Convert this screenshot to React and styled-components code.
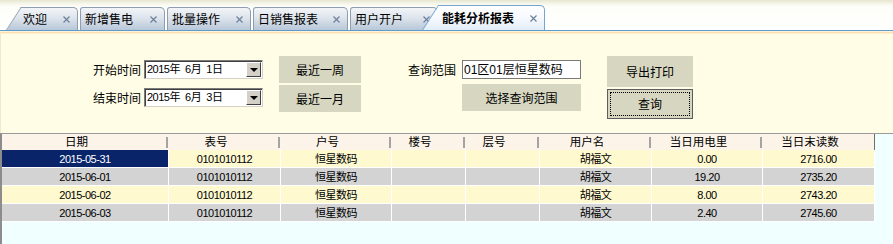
import React from "react";
import styled, { createGlobalStyle } from "styled-components";

const GlobalStyle = createGlobalStyle`
  html, body {
    margin: 0;
    padding: 0;
  }
  body {
    width: 893px;
    height: 244px;
    overflow: hidden;
    background: #f0ffff;
    font-family: "Liberation Sans", "Noto Sans CJK SC", sans-serif;
    font-size: 12px;
    color: #000;
  }
`;

const Page = styled.div`
  width: 893px;
  height: 244px;
  display: flex;
  flex-direction: column;
`;

const TabBar = styled.div`
  height: 30px;
  display: flex;
  align-items: flex-end;
  padding-left: 22px;
  box-sizing: border-box;
  background: linear-gradient(#e6e6cf 0, #f3f3e6 3px, #fdfdf8 6px, #ffffff 100%);
`;

const Tab = styled.div`
  position: relative;
  z-index: ${(p) => (p.$active ? 2 : 1)};
  box-sizing: border-box;
  width: ${(p) => p.$width}px;
  height: ${(p) => (p.$active ? 25 : 23)}px;
  margin-left: ${(p) => p.$gap}px;
  display: flex;
  align-items: center;
  justify-content: space-between;
  padding: 1px 8px 0 ${(p) => p.$pad}px;
  font-family: "Noto Sans CJK SC", sans-serif;
  font-size: 12px;
  line-height: 1;
  font-weight: ${(p) => (p.$active ? 700 : 400)};

  &::after {
    content: "";
    position: absolute;
    inset: 0;
    z-index: -1;
    border: 1px solid ${(p) => (p.$active ? "#74a5d1" : "#8e9db2")};
    border-bottom: none;
    border-left-style: ${(p) => (p.$slant ? "none" : "solid")};
    border-top-right-radius: 5px;
    border-top-left-radius: ${(p) => (p.$slant ? 0 : 3)}px;
    background: ${(p) =>
      p.$active
        ? "linear-gradient(#ffffff, #f6f9fd 50%, #e3edf8)"
        : "linear-gradient(#f3f5f8, #dde4ec 45%, #b8c7d9)"};
  }

  &::before {
    content: "";
    display: ${(p) => (p.$slant ? "block" : "none")};
    position: absolute;
    top: 0;
    bottom: 0;
    left: -16px;
    width: 32px;
    z-index: -1;
    border-left: 1px solid ${(p) => (p.$active ? "#74a5d1" : "#8e9db2")};
    border-top: 1px solid ${(p) => (p.$active ? "#74a5d1" : "#8e9db2")};
    background: ${(p) =>
      p.$active
        ? "linear-gradient(#ffffff, #f6f9fd 50%, #e3edf8)"
        : "linear-gradient(#f3f5f8, #dde4ec 45%, #b8c7d9)"};
    transform: skewX(-33deg);
    transform-origin: bottom left;
  }
`;

const Close = styled.svg`
  width: 7px;
  height: 7px;
  flex: none;
`;

const Stripe = styled.div`
  height: 4px;
  background: linear-gradient(
    #5a9ccc 0 1px,
    #fff4da 1px 2px,
    #fde0b0 2px 3px,
    #fff0d2 3px 4px
  );
`;

const Panel = styled.div`
  box-sizing: border-box;
  height: 99px;
  background: #fffde6;
  border-left: 1px solid #f2e8cc;
  display: flex;
  align-items: flex-start;
  padding: 22px 0 0 92px;
  font-family: "Noto Sans CJK SC", sans-serif;
`;

const FieldColumn = styled.div`
  display: flex;
  flex-direction: column;
  gap: 9px;
  margin-top: 4px;
`;

const FieldRow = styled.div`
  display: flex;
  align-items: center;
  gap: 4px;
`;

const Label = styled.span`
  width: ${(p) => p.$w || 47}px;
  font-size: 12px;
  line-height: 1;
  white-space: nowrap;
`;

const DateBox = styled.div`
  box-sizing: border-box;
  width: 119px;
  height: 19px;
  background: #fff;
  border: 1px solid;
  border-color: #7b7b7b #d4d0c8 #d4d0c8 #7b7b7b;
  box-shadow: inset 1px 1px 0 #404040;
  display: flex;
  align-items: center;
  justify-content: space-between;
  padding: 0 1px 0 2px;
`;

const DateText = styled.span`
  font-family: "Liberation Sans", "Noto Sans CJK SC", sans-serif;
  font-size: 11px;
  letter-spacing: -0.5px;
  white-space: pre;
  line-height: 1;
`;

const DropButton = styled.span`
  box-sizing: border-box;
  width: 15px;
  height: 15px;
  background: #d4d0c8;
  border: 1px solid;
  border-color: #ffffff #404040 #404040 #ffffff;
  display: flex;
  align-items: center;
  justify-content: center;

  &::before {
    content: "";
    border-left: 4px solid transparent;
    border-right: 4px solid transparent;
    border-top: 4px solid #000;
    margin-top: 1px;
  }
`;

const ButtonColumn = styled.div`
  display: flex;
  flex-direction: column;
  gap: 2px;
  margin-left: ${(p) => p.$ml}px;
`;

const Button = styled.button`
  box-sizing: border-box;
  width: ${(p) => p.$w}px;
  height: ${(p) => p.$h}px;
  padding: 0;
  background: #d7d7c1;
  border: ${(p) => (p.$focus ? "1px solid #5c5c5c" : "none")};
  outline: ${(p) => (p.$focus ? "1px dotted #000" : "none")};
  outline-offset: -4px;
  font-family: "Noto Sans CJK SC", sans-serif;
  font-size: 12px;
  color: #000;
  line-height: 1;
`;

const RangeGroup = styled.div`
  display: grid;
  grid-template-columns: 45px 119px;
  column-gap: 9px;
  row-gap: 5px;
  align-items: center;
  margin-left: 47px;
  margin-top: 4px;
`;

const TextInput = styled.div`
  box-sizing: border-box;
  width: 119px;
  height: 19px;
  background: #fff;
  border: 1px solid #7a7a7a;
  display: flex;
  align-items: center;
  padding-left: 1px;
  font-family: "Liberation Sans", "Noto Sans CJK SC", sans-serif;
  font-size: 12px;
  line-height: 1;
`;

const GridArea = styled.div`
  flex: 1;
  border-top: 1px solid #9a9a9a;
  border-left: 2px solid #8c8c8c;
  background: #f0ffff;
`;

const columns = "167px 112px 111px 74px 74px 112px 111px 112px";

const HeaderRow = styled.div`
  display: grid;
  grid-template-columns: ${columns};
  box-sizing: border-box;
  width: 873px;
  height: 16px;
  background: #fcf4e9;
  border-right: 1px solid #6e6e6e;
`;

const HeaderCell = styled.div`
  display: flex;
  align-items: center;
  justify-content: center;
  padding-right: 18px;
  font-family: "Noto Sans CJK SC", sans-serif;
  font-size: 11.5px;
  line-height: 1;
  background: ${(p) =>
    p.$last
      ? "none"
      : "linear-gradient(#a4a4a4, #a4a4a4) no-repeat right 1px center / 2px 11px"};
`;

const Row = styled.div`
  display: grid;
  grid-template-columns: ${columns};
  width: 873px;
  height: 18px;
  box-sizing: border-box;
  border-bottom: 1px solid #fff;
`;

const Cell = styled.div`
  display: flex;
  align-items: center;
  justify-content: center;
  border-right: 1px solid #fff;
  background: ${(p) => (p.$selected ? "#0a246a" : p.$bg)};
  color: ${(p) => (p.$selected ? "#fff" : "#000")};
  font-family: "Liberation Sans", "Noto Sans CJK SC", sans-serif;
  font-size: 11px;
  letter-spacing: -0.5px;
  line-height: 1;
  padding-top: 1px;
`;

const tabs = [
  { title: "欢迎", width: 56, gap: 0, pad: 1, slant: true },
  { title: "新增售电", width: 85, gap: 2, pad: 5 },
  { title: "批量操作", width: 84, gap: 2, pad: 5 },
  { title: "日销售报表", width: 95, gap: 2, pad: 5 },
  { title: "用户开户", width: 88, gap: 2, pad: 5 },
  { title: "能耗分析报表", width: 107, gap: 0, pad: 4, slant: true, active: true },
];

const headers = ["日期", "表号", "户号", "楼号", "层号", "用户名", "当日用电里", "当日末读数"];

const rows = [
  ["2015-05-31", "0101010112", "恒星数码", "", "", "胡福文", "0.00", "2716.00"],
  ["2015-06-01", "0101010112", "恒星数码", "", "", "胡福文", "19.20", "2735.20"],
  ["2015-06-02", "0101010112", "恒星数码", "", "", "胡福文", "8.00", "2743.20"],
  ["2015-06-03", "0101010112", "恒星数码", "", "", "胡福文", "2.40", "2745.60"],
];

const CloseIcon = () => (
  <Close viewBox="0 0 7 7">
    <path d="M0.5 0.5 L6.5 6.5 M6.5 0.5 L0.5 6.5" stroke="#6d819c" strokeWidth="1.2" />
  </Close>
);

const App = () => {
  return (
    <>
      <GlobalStyle />
      <Page>
        <TabBar>
          {tabs.map((t) => (
            <Tab
              key={t.title}
              $width={t.width}
              $gap={t.gap}
              $pad={t.pad}
              $slant={t.slant}
              $active={t.active}
            >
              <span>{t.title}</span>
              <CloseIcon />
            </Tab>
          ))}
        </TabBar>
        <Stripe />
        <Panel>
          <FieldColumn>
            <FieldRow>
              <Label>开始时间</Label>
              <DateBox>
                <DateText>{"2015年  6月  1日"}</DateText>
                <DropButton />
              </DateBox>
            </FieldRow>
            <FieldRow>
              <Label>结束时间</Label>
              <DateBox>
                <DateText>{"2015年  6月  3日"}</DateText>
                <DropButton />
              </DateBox>
            </FieldRow>
          </FieldColumn>

          <ButtonColumn $ml={16}>
            <Button $w={82} $h={27}>最近一周</Button>
            <Button $w={82} $h={27}>最近一月</Button>
          </ButtonColumn>

          <RangeGroup>
            <Label $w={45}>查询范围</Label>
            <TextInput>01区01层恒星数码</TextInput>
            <span />
            <Button $w={119} $h={27}>选择查询范围</Button>
          </RangeGroup>

          <ButtonColumn $ml={26}>
            <Button $w={86} $h={31}>导出打印</Button>
            <Button $w={86} $h={30} $focus>查询</Button>
          </ButtonColumn>
        </Panel>

        <GridArea>
          <HeaderRow>
            {headers.map((h, i) => (
              <HeaderCell key={h} $last={i === headers.length - 1}>
                {h}
              </HeaderCell>
            ))}
          </HeaderRow>
          {rows.map((r, ri) => (
            <Row key={r[0]}>
              {r.map((c, ci) => (
                <Cell
                  key={ci}
                  $bg={ri % 2 === 0 ? "#fff9d0" : "#d3d3d3"}
                  $selected={ri === 0 && ci === 0}
                >
                  {c}
                </Cell>
              ))}
            </Row>
          ))}
        </GridArea>
      </Page>
    </>
  );
};

export default App;
